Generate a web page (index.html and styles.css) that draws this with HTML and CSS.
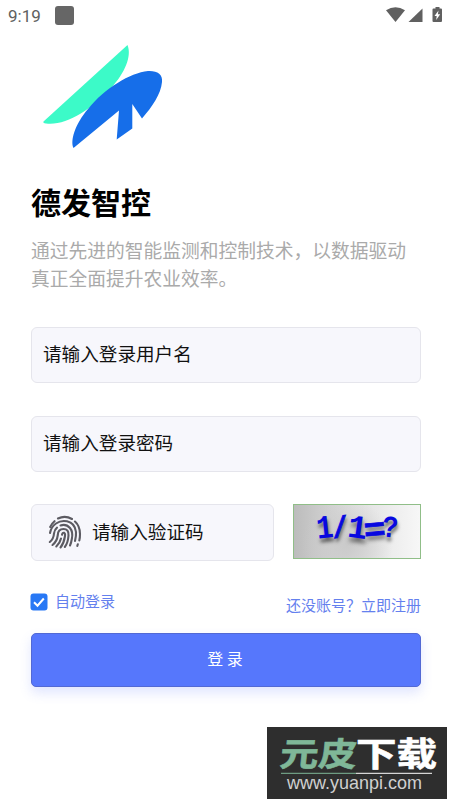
FILE: index.html
```html
<!DOCTYPE html>
<html lang="zh-CN">
<head>
<meta charset="utf-8">
<title>德发智控</title>
<link rel="stylesheet" href="styles.css">
</head>
<body>
<header class="status">
  <span class="time">9:19</span><i class="app-dot"></i>
  <svg class="status-icons" width="58" height="20" viewBox="0 0 58 20">
    <path d="M0 4.200Q9.500-1.500 19 4.200L9.500 16Z" fill="#606060"/>
    <path d="M36.500 2.500V16H22.500Z" fill="#606060"/>
    <path d="M47.500 2.500h2V1h4v1.500h1.500q1 0 1 1V15q0 1-1 1h-7.500q-1 0-1-1V3.500q0-1 1-1z" fill="#606060"/>
    <path d="M52.500 4.500 48.500 10h2.200l-.5 4 4-5.700h-2.300z" fill="#fff"/>
  </svg>
</header>
<main class="page">
  <svg class="logo" width="132" height="112" viewBox="31 40 132 112">
    <path d="M43.500 121.500 127.500 45C132 56 125 73 111 88C91 110 66 126 46 123.500Q42.500 123 43.500 121.500Z" fill="#3cfac8"/>
    <path d="M73.500 148C70 141 75 124 88 109C105 88 130 73 148 71C157 70.500 163 74 162 82C161 94 152 107 142 118.500L132.300 104V128.500L116.700 139.500 119 110.500Z" fill="#166ee9"/>
  </svg>
  <h1>德发智控</h1>
  <p class="desc">通过先进的智能监测和控制技术，以数据驱动<br>真正全面提升农业效率。</p>
  <div class="field">请输入登录用户名</div>
  <div class="field">请输入登录密码</div>
  <div class="code-row">
    <div class="field code-field">
      <svg class="finger" width="34" height="34" viewBox="0 0 34 34" fill="none" stroke="#5c5b62" stroke-width="2.100" stroke-linecap="round">
        <path d="M10 3.500Q17 0 24 4M2.200 12Q3.600 8.700 6.500 6.200M27 6.500Q32 11 32 19Q32 23 31.300 25.500M29.800 29.200 29.300 31"/>
        <path d="M2 18Q3 12 8 8.500Q13 5 19 6.300Q27 8 28 17Q28.300 21 27 26"/>
        <path d="M1.800 27Q5.600 24 6 18.500Q6.500 14.500 9 12.600M12.500 10.500Q18 8.500 22 13Q25.200 17 23.900 23.500Q23.300 27.500 22 30.500"/>
        <path d="M4.500 30Q9 26.500 9.800 20Q10 14 15.500 14Q21 14 20.500 20.500Q20 28 16.800 32"/>
        <path d="M8.300 31.500Q12 28 13 23.500M14 19.800Q14.500 17.300 16.200 17.800Q17.500 18.500 16.900 21.500Q16 28 12.500 32.500"/>
      </svg>
      <span>请输入验证码</span>
    </div>
    <div class="captcha"><span class="c1">1</span><span class="c2">/</span><span class="c3">1</span><span class="c4">=</span><span class="c5">?</span></div>
  </div>
  <div class="options">
    <label class="auto"><svg width="18" height="18" viewBox="0 0 18 18"><rect x=".5" y=".5" width="17" height="17" rx="3" fill="#2878f5"/><path d="m4 9.200 3.500 3.500 6.300-7.200" fill="none" stroke="#fff" stroke-width="2"/></svg><span>自动登录</span></label>
    <a class="register">还没账号？立即注册</a>
  </div>
  <div class="submit">登 录</div>
</main>
<aside class="watermark">
  <svg width="180" height="72" viewBox="0 0 180 72">
    <g class="brand">
      <text transform="translate(12 39) skewX(-6)" textLength="77" lengthAdjust="spacingAndGlyphs" fill="#7fb798" stroke="#7fb798">元皮</text>
      <text transform="translate(89 39)" textLength="81" lengthAdjust="spacingAndGlyphs" fill="#fff" stroke="#fff">下载</text>
    </g>
    <path d="M14 46.300H89" stroke="#7fb798"/><path d="M89 46.300H165" stroke="#fff"/>
    <text class="url" x="20" y="62" textLength="135" lengthAdjust="spacingAndGlyphs">www.yuanpi.com</text>
  </svg>
</aside>
</body>
</html>
```
FILE: styles.css
```css
* { box-sizing: border-box; }
body {
  margin: 0;
  height: 800px;
  position: relative;
  overflow: hidden;
  background: #fff;
  font-family: "Noto Sans CJK SC", sans-serif;
}
.status { height: 40px; display: flex; align-items: flex-start; padding: 6px 6px 0 8px; color: #606060; }
.time { font: 17px/20px Roboto, sans-serif; width: 47px; }
.app-dot { width: 19px; height: 19px; border-radius: 3px; background: #666; }
.status-icons { margin: 0 0 0 auto; }
.page { padding: 0 29px 0 31px; }
.logo { display: block; }
h1 { margin: 27px 0 0; font-size: 30px; line-height: 44px; font-weight: 700; color: #000; }
.desc { margin: 13px 0 35px; font-size: 18.75px; line-height: 28px; color: #aaa; white-space: nowrap; }
.field {
  height: 56px;
  margin-bottom: 33px;
  padding: 0 11px 5px;
  border: 1px solid #e5e5ec;
  border-radius: 6px;
  background: #f7f7fc;
  display: flex;
  align-items: center;
  font-size: 18.6px;
  line-height: 28px;
  color: #111;
}
.code-row { display: flex; justify-content: space-between; align-items: flex-start; margin-top: -1px; }
.code-field { width: 243px; height: 57px; margin: 0; padding: 0 0 1px 16px; gap: 10px; }
.code-field span { margin-top: -3px; }
.finger { flex: none; }
.captcha {
  width: 128px;
  height: 55px;
  border: 1px solid #90be88;
  background: radial-gradient(circle at 42% 75%, #cacaca, transparent 55%), linear-gradient(90deg, #bcbcbc, #e0e0e0 48%, #f7f7f7);
  color: #0808e0;
  display: flex;
  align-items: center;
  padding: 0 0 3px 23px;
  font: bold 33px/40px "Liberation Mono", monospace;
  text-shadow: 1px 4px 4px #222a;
}
.captcha span { display: flex; justify-content: center; flex: none; }
.c1 { width: 16px; transform: rotate(-6deg) scaleX(.85); }
.c2 { width: 15px; transform: rotate(-6deg) scale(.8, .9); -webkit-text-stroke: 1px; }
.c3 { width: 19px; transform: rotate(8deg); }
.c4 { width: 16px; transform: translateY(2px) rotate(-5deg) scaleX(1.1); -webkit-text-stroke: .8px; }
.c5 { width: 14px; font-size: 31px; transform: translateY(-1px) rotate(6deg) scaleX(.85); }
.options { height: 44px; margin-top: 28px; display: flex; justify-content: space-between; color: #6480ee; font-size: 15px; line-height: 22px; }
.auto { display: flex; gap: 7px; height: 25px; align-items: center; margin-left: -1px; }
.auto span { margin-top: -1px; }
.auto svg { flex: none; }
.register { margin-top: 5px; }
.submit {
  height: 54px;
  border: 1px solid #5269d4;
  border-radius: 5px;
  background: #5677fc;
  color: #fff;
  font-size: 16px;
  line-height: 49px;
  text-align: center;
  text-indent: -2px;
  white-space: pre;
  box-shadow: 0 6px 12px #5677fc2e;
}
.watermark { position: absolute; left: 267px; top: 727px; width: 180px; height: 72px; background: #2e2e2e; }
.watermark svg { display: block; }
.brand { font-size: 33px; font-weight: 700; stroke-width: .6px; }
.url { font: 19px "Liberation Sans", sans-serif; fill: #d0d0d0; }
```
